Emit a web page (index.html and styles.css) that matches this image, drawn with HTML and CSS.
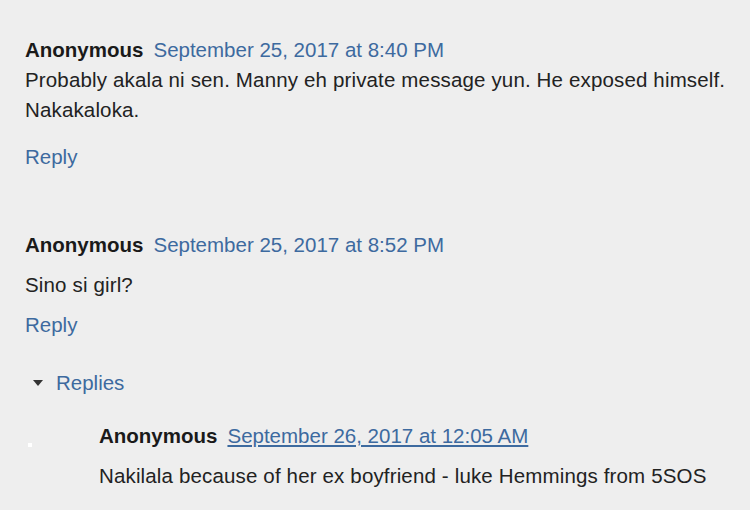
FILE: index.html
```html
<!DOCTYPE html>
<html lang="en">
<head>
    <meta charset="UTF-8">
    <title>Comments</title>
    <link rel="stylesheet" href="styles.css">
</head>
<body>
    <div class="comments">
        <!-- first comment -->
        <div class="comment first">
            <div class="comment-header">
                <span class="user">Anonymous</span>
                <a class="date" href="#">September 25, 2017 at 8:40 PM</a>
            </div>
            <p class="comment-body">Probably akala ni sen. Manny eh private message yun. He exposed himself. Nakakaloka.</p>
            <a class="reply-link" href="#">Reply</a>
        </div>

        <!-- second comment -->
        <div class="comment">
            <div class="comment-header">
                <span class="user">Anonymous</span>
                <a class="date" href="#">September 25, 2017 at 8:52 PM</a>
            </div>
            <p class="comment-body">Sino si girl?</p>
            <a class="reply-link" href="#">Reply</a>
        </div>

        <div class="replies-toggle">
            <span class="arrow"></span>
            <a href="#">Replies</a>
        </div>

        <div class="thread">
            <span class="dot"></span>
            <div class="comment nested">
                <div class="comment-header">
                    <span class="user">Anonymous</span>
                    <a class="date underline" href="#">September 26, 2017 at 12:05 AM</a>
                </div>
                <p class="comment-body">Nakilala because of her ex boyfriend - luke Hemmings from 5SOS</p>
            </div>
        </div>
    </div>
</body>
</html>
```

FILE: styles.css
```css
body {
    margin: 0;
    background-color: #eeeeee;
    color: #222;
    font-family: "Liberation Sans", Arial, sans-serif;
    font-size: 20.5px;
}
a {
    color: #3d6a9f;
    text-decoration: none;
}
.comments {
    padding: 35px 0 0 25px;
}
.comment {
    margin-bottom: 58px;
}
.comment-header {
    display: flex;
    gap: 10px;
    line-height: 30px;
}
.user {
    font-weight: bold;
    color: #1a1a1a;
}
.comment-body {
    margin: 10px 0 0;
    line-height: 30px;
    letter-spacing: 0.15px;
    padding-right: 6px;
}
.comment.first .comment-body {
    margin-top: 0;
}
.reply-link {
    display: block;
    margin-top: 10px;
    line-height: 30px;
}
.comment.first .reply-link {
    margin-top: 17px;
}
.replies-toggle {
    display: flex;
    align-items: center;
    gap: 13px;
    line-height: 30px;
    margin-top: -30px;
    padding-left: 8px;
}
.arrow {
    width: 0;
    height: 0;
    border-left: 5.5px solid transparent;
    border-right: 5.5px solid transparent;
    border-top: 6px solid #333;
}
.thread {
    display: flex;
    margin: 21px 0 0 -25px;
    padding-top: 2px;
}
.dot {
    width: 4px;
    height: 4px;
    background-color: #fff;
    margin: 22px 0 0 28px;
}
.nested {
    margin: 0 0 0 67px;
}
.date.underline {
    text-decoration: underline;
}
```
